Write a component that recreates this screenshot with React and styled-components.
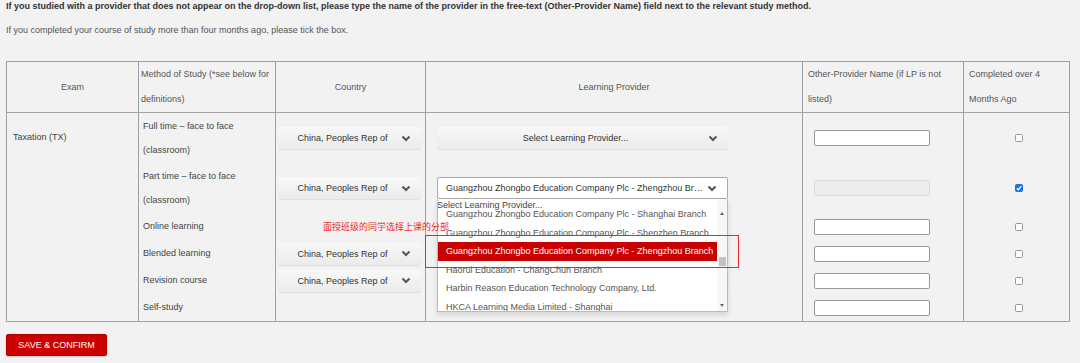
import { createGlobalStyle, styled } from "styled-components";

const GlobalStyle = createGlobalStyle`
  *, *::before, *::after { box-sizing: border-box; }
  html, body { margin: 0; background: #f2f2f2; }
  body { font-family: "Liberation Sans", Arial, sans-serif; }
`;

const COLS = "131px 137px 150px 377px 161px 106px";
const ROWS = "51px 50px 50px 27px 27px 27px 27px";

const rows = [
  { method: "Full time – face to face (classroom)", country: true, provider: "closed", other: "input", checked: false },
  { method: "Part time – face to face (classroom)", country: true, provider: "open", other: "disabled", checked: true },
  { method: "Online learning", country: false, provider: null, other: "input", checked: false },
  { method: "Blended learning", country: true, provider: "closed", other: "input", checked: false },
  { method: "Revision course", country: true, provider: "closed", other: "input", checked: false },
  { method: "Self-study", country: false, provider: null, other: "input", checked: false },
];

const options = [
  "Guangzhou Zhongbo Education Company Plc - Shanghai Branch",
  "Guangzhou Zhongbo Education Company Plc - Shenzhen Branch",
  "Guangzhou Zhongbo Education Company Plc - Zhengzhou Branch",
  "Haorui Education - ChangChun Branch",
  "Harbin Reason Education Technology Company, Ltd.",
  "HKCA Learning Media Limited - Shanghai",
];

const Chevron = () => (
  <svg width="10" height="7" viewBox="0 0 10 7">
    <polyline points="1.5,1.5 5,5 8.5,1.5" fill="none" stroke="#555" strokeWidth="2" />
  </svg>
);

const App = () => {
  return (
    <Page>
      <GlobalStyle />
      <Intro $bold>
        If you studied with a provider that does not appear on the drop-down list, please type the name of the
        provider in the free-text (Other-Provider Name) field next to the relevant study method.
      </Intro>
      <Intro>If you completed your course of study more than four months ago, please tick the box.</Intro>

      <Table>
        <HeadCell $first $center>Exam</HeadCell>
        <HeadCell $pad={2}>Method of Study (*see below for definitions)</HeadCell>
        <HeadCell $center>Country</HeadCell>
        <HeadCell $center>Learning Provider</HeadCell>
        <HeadCell>Other-Provider Name (if LP is not listed)</HeadCell>
        <HeadCell>Completed over 4 Months Ago</HeadCell>

        <ExamCell>Taxation (TX)</ExamCell>

        {rows.map((r, i) => [
          <MethodCell key={`m${i}`}>{r.method}</MethodCell>,
          <BodyCell key={`c${i}`} $padLeft={2}>
            {r.country && (
              <DropButton $w={143}>
                <DropLabel>China, Peoples Rep of</DropLabel>
                <Chevron />
              </DropButton>
            )}
          </BodyCell>,
          <BodyCell key={`p${i}`} $padLeft={11}>
            {r.provider === "closed" && (
              <DropButton $w={291}>
                <DropLabel>Select Learning Provider...</DropLabel>
                <Chevron />
              </DropButton>
            )}
            {r.provider === "open" && (
              <SelectWrap>
                <DropButton $w={291} $open>
                  <DropLabel $left>Guangzhou Zhongbo Education Company Plc - Zhengzhou Branch</DropLabel>
                  <Chevron />
                </DropButton>
                <OptionList>
                  <Options>
                    <Caption>Select Learning Provider...</Caption>
                    <OptionGroup>
                      {options.map((o, j) => (
                        <Option key={o} $active={j === 2}>{o}</Option>
                      ))}
                    </OptionGroup>
                  </Options>
                  <ScrollTrack>
                    <Arrow $up />
                    <Thumb />
                    <Arrow />
                  </ScrollTrack>
                </OptionList>
              </SelectWrap>
            )}
          </BodyCell>,
          <BodyCell key={`o${i}`} $padLeft={11}>
            <TextInput $disabled={r.other === "disabled"} />
          </BodyCell>,
          <BodyCell key={`k${i}`} $center $padLeft={5}>
            <Check $checked={r.checked}>
              {r.checked && (
                <svg width="6" height="6" viewBox="0 0 6 6">
                  <polyline points="0.8,3.2 2.4,4.7 5.2,1.2" fill="none" stroke="#fff" strokeWidth="1.3" />
                </svg>
              )}
            </Check>
          </BodyCell>,
        ])}

        <Note>面授班级的同学选择上课的分部</Note>
        <Highlight />
      </Table>

      <SaveButton>SAVE &amp; CONFIRM</SaveButton>
    </Page>
  );
};

export default App;

const Page = styled.div`
  padding: 0 6px;
  min-height: 363px;
`;

const Intro = styled.p`
  margin: 0 0 12px;
  font-size: 9px;
  line-height: 12px;
  font-weight: ${(p) => (p.$bold ? 700 : 400)};
  color: ${(p) => (p.$bold ? "#333" : "#555")};
  white-space: nowrap;
`;

const Table = styled.div`
  position: relative;
  margin-top: 25px;
  display: grid;
  grid-template-columns: ${COLS};
  grid-template-rows: ${ROWS};
  width: fit-content;
  border: 1px solid #a0a0a0;
  font-size: 9px;
`;

const HeadCell = styled.div`
  display: flex;
  align-items: center;
  justify-content: ${(p) => (p.$center ? "center" : "flex-start")};
  text-align: ${(p) => (p.$center ? "center" : "left")};
  padding: 0 ${(p) => (p.$pad ?? 5)}px;
  border-left: ${(p) => (p.$first ? "none" : "1px solid #a0a0a0")};
  border-bottom: 1px solid #a0a0a0;
  line-height: 25px;
  color: #555;
`;

const ExamCell = styled.div`
  grid-row: 2 / span 6;
  padding: 12px 6px 0;
  line-height: 25px;
  color: #444;
`;

const BodyCell = styled.div`
  display: flex;
  align-items: center;
  justify-content: ${(p) => (p.$center ? "center" : "flex-start")};
  padding-left: ${(p) => p.$padLeft ?? 0}px;
  border-left: 1px solid #a0a0a0;
`;

const MethodCell = styled(BodyCell)`
  padding: 0 4px;
  line-height: 24.5px;
  color: #444;
`;

const DropButton = styled.div`
  width: ${(p) => p.$w}px;
  height: 22px;
  flex-shrink: 0;
  display: flex;
  align-items: center;
  padding: ${(p) => (p.$open ? "0 10px 0 8px" : "0 10px 0 6px")};
  background: ${(p) => (p.$open ? "#fff" : "linear-gradient(#f8f8f8, #ebebeb)")};
  border: ${(p) => (p.$open ? "1px solid #aaa" : "none")};
  border-radius: 2px;
  box-shadow: ${(p) => (p.$open ? "none" : "0 1px 1px rgba(0, 0, 0, 0.08)")};
  color: #333;
`;

const DropLabel = styled.span`
  flex: 1;
  min-width: 0;
  text-align: ${(p) => (p.$left ? "left" : "center")};
  white-space: nowrap;
  overflow: hidden;
  text-overflow: ellipsis;
`;

const SelectWrap = styled.div`
  position: relative;
  z-index: 2;
`;

const OptionList = styled.div`
  position: absolute;
  top: 100%;
  left: 0;
  width: 291px;
  height: 113px;
  display: flex;
  background: #fff;
  border: 1px solid #bbb;
  border-top: none;
  box-shadow: 0 3px 5px rgba(0, 0, 0, 0.12);
  overflow: hidden;
`;

const Options = styled.div`
  flex: 1;
  min-width: 0;
`;

const Caption = styled.div`
  height: 12px;
  line-height: 12px;
  margin-left: -1px;
  color: #444;
  white-space: nowrap;
`;

const OptionGroup = styled.div`
  margin-top: -6px;
`;

const Option = styled.div`
  height: 18.6px;
  line-height: 18.6px;
  padding-left: 8px;
  white-space: nowrap;
  background: ${(p) => (p.$active ? "#c80000" : "transparent")};
  color: ${(p) => (p.$active ? "#fff" : "#555")};
`;

const ScrollTrack = styled.div`
  width: 10px;
  display: flex;
  flex-direction: column;
  align-items: center;
  background: #f7f7f7;
`;

const Arrow = styled.span`
  width: 0;
  height: 0;
  border-left: 2.5px solid transparent;
  border-right: 2.5px solid transparent;
  ${(p) =>
    p.$up
      ? "border-bottom: 3px solid #666; margin-top: 13px;"
      : "border-top: 3px solid #666; margin-top: 38px;"}
`;

const Thumb = styled.span`
  width: 7px;
  height: 9px;
  margin-top: 42px;
  background: #c1c1c1;
`;

const TextInput = styled.div`
  width: 116px;
  height: 16px;
  background: ${(p) => (p.$disabled ? "#ececec" : "#fff")};
  border: 1px solid ${(p) => (p.$disabled ? "#d9d9d9" : "#999")};
  border-radius: 2px;
`;

const Check = styled.span`
  width: 8px;
  height: 8px;
  display: flex;
  align-items: center;
  justify-content: center;
  border: 1px solid ${(p) => (p.$checked ? "#1a73e8" : "#999")};
  border-radius: 1.5px;
  background: ${(p) => (p.$checked ? "#1a73e8" : "#fff")};
`;

const Note = styled.span`
  position: absolute;
  left: 316px;
  top: 159px;
  font-family: "Noto Sans CJK SC", sans-serif;
  font-size: 9px;
  line-height: 12px;
  color: #ee2a2a;
  white-space: nowrap;
  z-index: 3;
`;

const Highlight = styled.span`
  position: absolute;
  left: 418px;
  top: 173px;
  width: 314px;
  height: 33px;
  border: 1.5px solid #e8262c;
  z-index: 3;
  pointer-events: none;
`;

const SaveButton = styled.button`
  margin-top: 12px;
  width: 101px;
  height: 22px;
  padding: 0;
  background: #cc0000;
  border: 1px solid #b00000;
  border-radius: 2px;
  box-shadow: 0 1px 2px rgba(0, 0, 0, 0.2);
  color: #fff;
  font-family: "Liberation Sans", Arial, sans-serif;
  font-size: 9px;
`;
